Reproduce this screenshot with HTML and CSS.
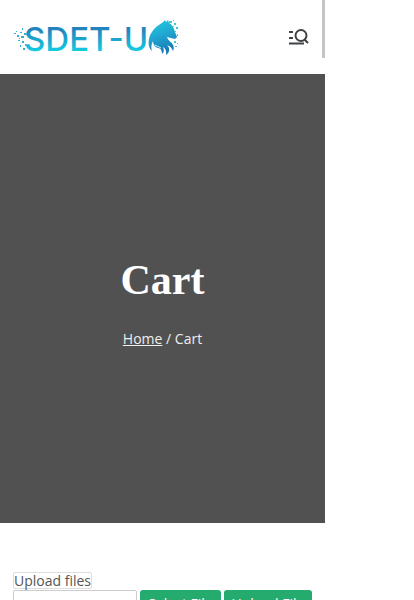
FILE: index.html
```html
<!DOCTYPE html>
<html lang="en">
<head>
<meta charset="utf-8">
<meta name="viewport" content="width=device-width, initial-scale=1">
<title>Cart</title>
<link rel="stylesheet" href="styles.css">
</head>
<body>
<div class="page">
  <span class="scroll-thumb" aria-hidden="true"></span>
  <header class="site-header">
    <a class="brand" href="#" aria-label="SDET-U">
      <svg width="168" height="44" viewBox="0 0 168 44">
        <defs>
          <linearGradient id="ink" gradientUnits="userSpaceOnUse" x1="0" y1="14" x2="0" y2="37">
            <stop offset="0" stop-color="#2184bd"/>
            <stop offset="1" stop-color="#14cfe3"/>
          </linearGradient>
          <linearGradient id="mane" x1="0" y1="0" x2="0.3" y2="1">
            <stop offset="0" stop-color="#22cfe4"/>
            <stop offset="0.5" stop-color="#20a8d2"/>
            <stop offset="1" stop-color="#1878b5"/>
          </linearGradient>
        </defs>
        <text class="brand-text" x="11" y="36" fill="url(#ink)">SDET-U</text>
        <g fill="#35afd0">
          <path d="M1 18h2v1H1zM4 20h2v2H4zM7 17h2v1H7zM8 21h3v2H8zM5 25h2v1H5zM9 26h2v2H9zM7 30h1v2H7zM10 33h2v2h-2zM9 13h1v2H9zM11 18h3v2h-3zM3 16h1v1H3zM6 23h1v1H6zM12 29h1v2h-1z"/>
        </g>
        <path fill="url(#mane)" d="M139 36C134 32 135 22 139 17C142 11 149 9 152 5L153 7L155 5L156 8C160 10 161 14 162 17L164 22L162 24L158 23L154 22C155 26 159 27 160 30C161 32 161 34 160 36C159 33 157 31 154 30C158 34 156 38 153 40C154 36 152 33 150 32C152 36 150 38 149 39C149 35 147 33 145 33C141 32 140 28 140 26C138 30 138 33 139 36Z"/>
        <path fill="none" stroke="#b5edf4" stroke-width="1" d="M142 30C144 31 146 32 148 33"/>
        <path fill="#43c5d9" d="M156 6h3v2h-3zM161 8h2v2h-2zM158 11h3v1h-3zM163 12h2v2h-2zM161 16h2v1h-2zM164 19h1v2h-1zM161 26h2v2h-2zM164 28h1v1h-1zM162 31h2v1h-2zM160 5h1v1h-1z"/>
      </svg>
    </a>
    <button class="menu-button" type="button" aria-label="Menu and search">
      <svg width="22" height="18" viewBox="0 0 22 18" fill="none" stroke="#3f4245" stroke-width="2">
        <path d="M1 4h4M1 10h4M1 15.5h15M16 11l4 4"/>
        <circle cx="13" cy="7.500" r="5.500"/>
      </svg>
    </button>
  </header>
  <section class="hero">
    <h1 class="hero-title">Cart</h1>
    <nav class="crumbs" aria-label="Breadcrumb"><a href="#">Home</a> / Cart</nav>
  </section>
  <main class="content">
    <label class="upload-label" for="file-name">Upload files</label>
    <div class="upload-row">
      <input class="file-name" id="file-name" type="text">
      <button class="action select" type="button">Select File</button>
      <button class="action upload" type="button">Upload File</button>
    </div>
  </main>
</div>
</body>
</html>
```
FILE: styles.css
```css
* { box-sizing: border-box; }

body {
  margin: 0;
  padding-right: 89px;
  height: 100vh;
  overflow: hidden;
  background: #fff;
  color: #555;
  font: 14px/18px "Open Sans", sans-serif;
}

.page { position: relative; }

.scroll-thumb {
  position: absolute;
  top: 0;
  right: 0;
  width: 3px;
  height: 58px;
  background: #c5c5c5;
}

.site-header {
  display: flex;
  align-items: center;
  justify-content: space-between;
  padding: 15px 15px 15px 13px;
}

.brand { display: block; height: 44px; }

.brand-text {
  font-family: Inter, sans-serif;
  font-size: 33px;
  font-weight: 500;
}

.menu-button {
  display: flex;
  padding: 0;
  border: 0;
  background: none;
}

.hero {
  display: flex;
  flex-direction: column;
  align-items: center;
  gap: 24px;
  padding: 181px 16px 175px;
  background: #515151;
  color: #fff;
}

.hero-title {
  margin: 0;
  font: bold 42px/51px "Liberation Serif", serif;
}

.crumbs { color: #eee; }
.crumbs a { color: inherit; }

.content { padding: 49px 13px; }

.upload-label {
  display: table;
  margin-bottom: 1px;
  border: 1px solid #ddd;
  border-radius: 2px;
  line-height: 15px;
}

.upload-row {
  display: flex;
  gap: 3px;
}

.file-name {
  flex: 1;
  min-width: 0;
  height: 27px;
  border: 1px solid #ccc;
  border-radius: 2px;
}

.action {
  height: 27px;
  padding: 0;
  border: 0;
  border-radius: 3px;
  background: #26ab6e;
  color: #fff;
  font: 14px/18px "Open Sans", sans-serif;
}

.select { width: 81px; }
.upload { width: 88px; }
```
